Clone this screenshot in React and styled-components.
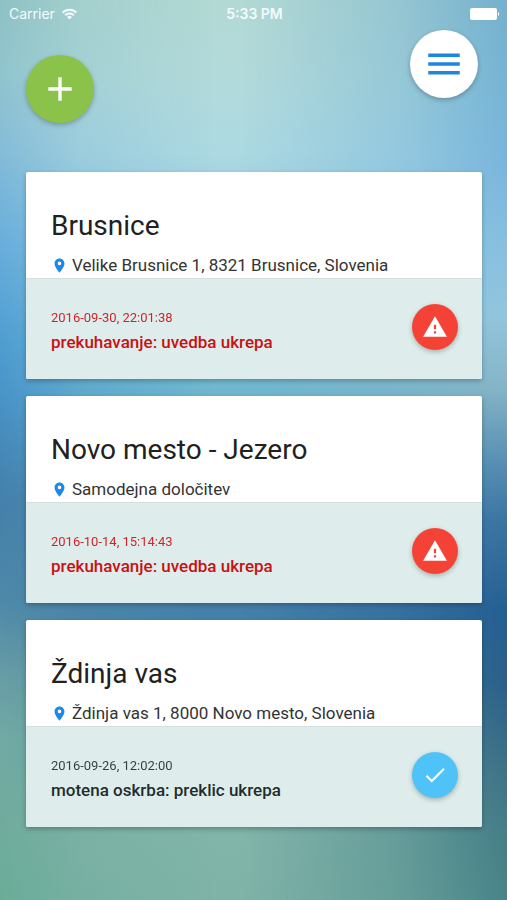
import React from "react";
import styled, { createGlobalStyle } from "styled-components";

const GlobalStyle = createGlobalStyle`
  *, *::before, *::after { box-sizing: border-box; }
  body { margin: 0; font-family: Roboto, sans-serif; }
  button { font: inherit; border: 0; padding: 0; cursor: pointer; }
`;

const Screen = styled.div`
  position: relative;
  isolation: isolate;
  min-height: 100vh;
  background: linear-gradient(
    #b2d9d4 0%, #b2dadb 9%, #acd9e2 17%, #8cc8db 28%, #70b8d0 43%,
    #4f93b8 55%, #4480aa 68%, #679c9f 82%, #82b5aa 93%, #7fb3a8 100%
  );

  &::before, &::after {
    content: "";
    position: absolute;
    inset: 0;
    z-index: -1;
  }
  &::before {
    background: linear-gradient(
      #8dc1c4 0%, #90c4cd 8%, #86bcd7 16%, #68aedb 27%, #4e9dd0 38%, #4893c8 44%,
      #447fa9 56%, #4f89a8 67%, #679ca5 75%, #71a9a4 82%, #6fab9c 92%, #69ac98 100%
    );
    mask-image: linear-gradient(to right, #000 0%, rgba(0, 0, 0, 0.4) 16%, transparent 42%);
  }
  &::after {
    background: linear-gradient(
      #74b0ce 0%, #76b4d4 10%, #79b5dc 18%, #86bfe0 27%, #93c5dd 35%, #86b4c6 43%,
      #5990b3 51%, #3a74a2 58%, #245e92 68%, #2b6089 76%, #3f7387 86%, #457f87 93%, #488488 100%
    );
    mask-image: linear-gradient(to left, #000 0%, rgba(0, 0, 0, 0.45) 22%, transparent 52%);
  }
`;

const StatusBar = styled.div`
  display: grid;
  grid-template-columns: 1fr auto 1fr;
  align-items: center;
  height: 28px;
  padding: 0 7px 0 9px;
  color: #f4fbfb;
  font: 400 14px/16px Inter, sans-serif;
`;

const Carrier = styled.div`
  display: flex;
  align-items: center;
  gap: 7px;
`;

const Clock = styled.time`
  font-weight: 600;
`;

const BatteryIcon = styled.svg`
  justify-self: end;
`;

const Actions = styled.header`
  display: flex;
  justify-content: space-between;
  align-items: flex-start;
  padding: 2px 29px 0 26px;
`;

const RoundButton = styled.button`
  display: grid;
  place-items: center;
  width: 68px;
  height: 68px;
  margin-top: ${(p) => (p.$lowered ? "25px" : "0")};
  border-radius: 50%;
  background: ${(p) => p.$fill};
  box-shadow: 0 2px 5px rgba(0, 0, 0, 0.26);
`;

const Locations = styled.main`
  display: grid;
  gap: 17px;
  padding: 49px 25px 72px 26px;
`;

const Card = styled.article`
  border-radius: 2px;
  background: #fff;
  box-shadow: 0 2px 5px rgba(0, 0, 0, 0.26);
  overflow: hidden;
`;

const Place = styled.div`
  padding: 37px 25px 2px;
`;

const PlaceName = styled.h2`
  margin: 0;
  color: #212121;
  font-size: 28px;
  font-weight: 400;
  line-height: 34px;
`;

const Address = styled.p`
  display: flex;
  align-items: center;
  gap: 4px;
  margin: 11px 0 0;
  color: #333;
  font-size: 17px;
  line-height: 22px;
`;

const Notice = styled.div`
  display: flex;
  align-items: flex-start;
  justify-content: space-between;
  padding: 25px 24px 24px 25px;
  border-top: 1px solid #d2e1df;
  background: #deedeb;
`;

const NoticeText = styled.div`
  padding-top: 3px;
  color: ${(p) => (p.$alert ? "#cc0f12" : "#1f2d2e")};
`;

const Stamp = styled.time`
  display: block;
  opacity: 0.9;
  font-size: 13px;
  line-height: 22px;
`;

const Message = styled.p`
  margin: 0;
  font-size: 17px;
  font-weight: 500;
  line-height: 26px;
`;

const Badge = styled.span`
  display: grid;
  place-items: center;
  width: 46px;
  height: 46px;
  border-radius: 50%;
  background: ${(p) => (p.$alert ? "#f44336" : "#4fc3f7")};
  box-shadow: 0 2px 5px rgba(0, 0, 0, 0.26);
`;

const icons = {
  pin: "M12 2C8.13 2 5 5.13 5 9c0 5.25 7 13 7 13s7-7.75 7-13c0-3.87-3.13-7-7-7zm0 9.5a2.5 2.5 0 0 1 0-5 2.5 2.5 0 0 1 0 5z",
  warning: "M1 21h22L12 2 1 21zm12-3h-2v-2h2v2zm0-4h-2v-4h2v4z",
  check: "M9 16.17L4.83 12l-1.42 1.41L9 19 21 7l-1.41-1.41z",
  menu: "M3 18h18v-2H3v2zm0-5h18v-2H3v2zm0-7v2h18V6H3z",
  plus: "M19 13h-6v6h-2v-6H5v-2h6V5h2v6h6v2z",
};

const Icon = ({ name, size, color }) => (
  <svg width={size} height={size} viewBox="0 0 24 24" fill={color} aria-hidden="true">
    <path d={icons[name]} />
  </svg>
);

const locations = [
  {
    name: "Brusnice",
    address: "Velike Brusnice 1, 8321 Brusnice, Slovenia",
    stamp: "2016-09-30, 22:01:38",
    message: "prekuhavanje: uvedba ukrepa",
    alert: true,
  },
  {
    name: "Novo mesto - Jezero",
    address: "Samodejna določitev",
    stamp: "2016-10-14, 15:14:43",
    message: "prekuhavanje: uvedba ukrepa",
    alert: true,
  },
  {
    name: "Ždinja vas",
    address: "Ždinja vas 1, 8000 Novo mesto, Slovenia",
    stamp: "2016-09-26, 12:02:00",
    message: "motena oskrba: preklic ukrepa",
    alert: false,
  },
];

export default function App() {
  return (
    <>
      <GlobalStyle />
      <Screen>
        <StatusBar>
          <Carrier>
            Carrier
            <svg width="15" height="12" viewBox="0 0 15 12" fill="none" stroke="#f7fcfc" strokeWidth="2" aria-hidden="true">
              <path d="M0.7 4.6a9.6 9.6 0 0 1 13.6 0" />
              <path d="M3.2 7.2a6.1 6.1 0 0 1 8.6 0" />
              <path d="M7.5 11.6 5 9.1a3.5 3.5 0 0 1 5 0z" fill="#f7fcfc" stroke="none" />
            </svg>
          </Carrier>
          <Clock>5:33 PM</Clock>
          <BatteryIcon width="30" height="12" viewBox="0 0 30 12" fill="#fff" aria-hidden="true">
            <rect width="27" height="12" rx="2" />
            <path d="M28 4a2.3 2.3 0 0 1 0 4z" />
          </BatteryIcon>
        </StatusBar>
        <Actions>
          <RoundButton $fill="#8bc34a" $lowered aria-label="Dodaj">
            <Icon name="plus" size={40} color="#fff" />
          </RoundButton>
          <RoundButton $fill="#fff" aria-label="Meni">
            <Icon name="menu" size={42} color="#1e86dc" />
          </RoundButton>
        </Actions>
        <Locations>
          {locations.map((item) => (
            <Card key={item.name}>
              <Place>
                <PlaceName>{item.name}</PlaceName>
                <Address>
                  <Icon name="pin" size={17} color="#1e88e5" />
                  {item.address}
                </Address>
              </Place>
              <Notice>
                <NoticeText $alert={item.alert}>
                  <Stamp>{item.stamp}</Stamp>
                  <Message>{item.message}</Message>
                </NoticeText>
                <Badge $alert={item.alert}>
                  <Icon name={item.alert ? "warning" : "check"} size={26} color="#fff" />
                </Badge>
              </Notice>
            </Card>
          ))}
        </Locations>
      </Screen>
    </>
  );
}
